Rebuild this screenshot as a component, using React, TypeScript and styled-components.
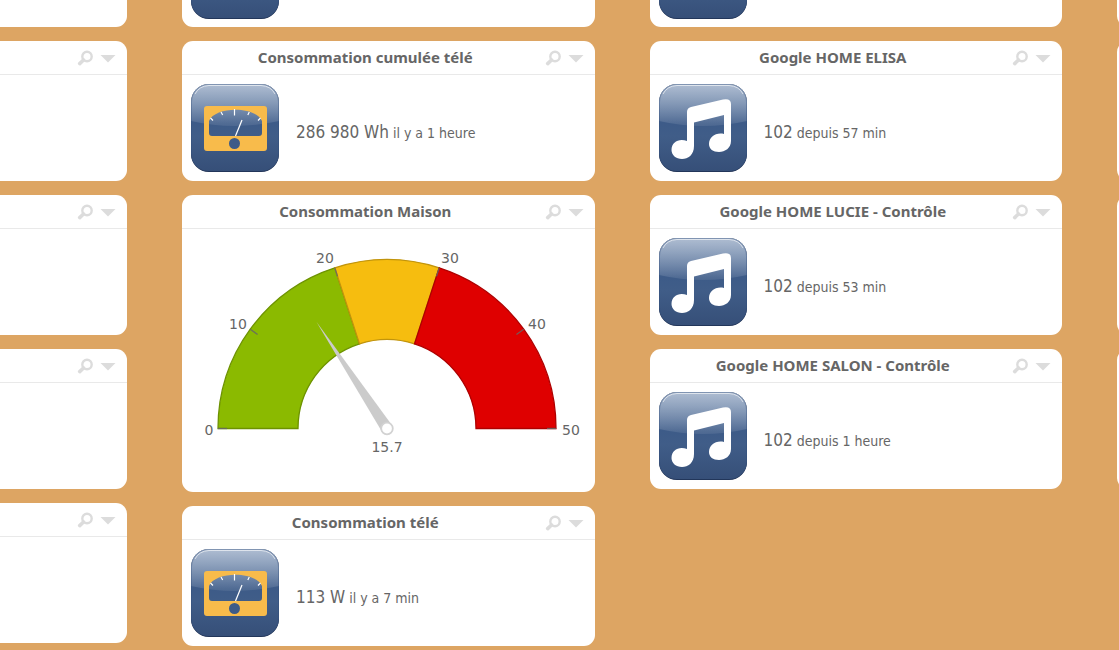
import React, { useId } from "react";
import styled, { createGlobalStyle } from "styled-components";

const GlobalStyle = createGlobalStyle`
  *, *::before, *::after { box-sizing: border-box; }
  body {
    margin: 0;
    background: #dda563;
    color: #666;
    font-family: "DejaVu Sans Condensed", "DejaVu Sans", sans-serif;
    overflow: hidden;
  }
`;

const Board = styled.main`
  display: grid;
  grid-template-columns: 127px minmax(0, 1fr) minmax(0, 1fr) 2px;
  column-gap: 55px;
  align-items: start;
`;

const Column = styled.section`
  display: flex;
  flex-direction: column;
  gap: 14px;
  min-width: 0;
`;

const EdgeColumn = styled(Column)`
  overflow: hidden;
`;

type Side = "left" | "right" | "none";

const cardRadius = { left: "0 11px 11px 0", right: "11px 0 0 11px", none: "11px" };

const Card = styled.article<{ $cut?: Side }>`
  flex: none;
  min-width: 40px;
  min-height: 140px;
  background: #fff;
  border-radius: ${({ $cut = "none" }) => cardRadius[$cut]};
`;

const PeekCard = styled.div<{ $cut?: Side }>`
  display: flex;
  align-items: flex-end;
  flex: none;
  min-width: 40px;
  height: 27px;
  padding: 0 9px 8px;
  overflow: hidden;
  background: #fff;
  border-radius: ${({ $cut = "none" }) =>
    $cut === "left" ? "0 0 11px 0" : $cut === "right" ? "0 0 0 11px" : "0 0 11px 11px"};
`;

const Header = styled.header`
  display: flex;
  align-items: center;
  height: 34px;
  padding: 0 11px 0 4px;
  border-bottom: 1px solid #e9e9e9;
`;

const Title = styled.h2`
  flex: 1;
  margin: 0;
  padding-bottom: 1px;
  font: bold 15px/20px "Noto Sans", sans-serif;
  text-align: center;
  white-space: nowrap;
`;

const Tools = styled.div`
  display: flex;
  align-items: center;
  gap: 7px;
  margin-left: auto;
`;

const ToolButton = styled.button`
  display: block;
  width: 16px;
  height: 16px;
  padding: 0;
  border: 0;
  background: none;
  color: #dcdcdc;
  cursor: pointer;

  svg { display: block; }
`;

const Body = styled.div`
  display: flex;
  align-items: center;
  gap: 17px;
  padding: 9px;
`;

const Reading = styled.p`
  margin: 0;
  padding-top: 8px;
  font-size: 14px;
  line-height: 24px;
  white-space: nowrap;
`;

const Value = styled.span`
  font-size: 17px;
`;

const Tile = styled.svg`
  display: block;
  flex: none;
  width: 88px;
  height: 88px;
`;

const GaugeArea = styled.div`
  display: flex;
  justify-content: center;
  height: 263px;

  svg { width: 412px; height: 263px; flex: none; }
  text { font: 14px "DejaVu Sans", sans-serif; fill: #666; }
`;

function IconTile({ kind }: { kind: "meter" | "music" }) {
  const id = useId();
  const base = `${id}base`;
  const gloss = `${id}gloss`;
  const clip = `${id}clip`;
  return (
    <Tile viewBox="0 0 88 88" aria-hidden="true">
      <defs>
        <linearGradient id={base} x1="0" y1="0" x2="0" y2="1">
          <stop offset="0" stopColor="#5f7ca5" />
          <stop offset="0.45" stopColor="#3d5b88" />
          <stop offset="0.6" stopColor="#405d88" />
          <stop offset="1" stopColor="#364f78" />
        </linearGradient>
        <linearGradient id={gloss} x1="0" y1="0" x2="0" y2="1">
          <stop offset="0" stopColor="#fff" stopOpacity="0.5" />
          <stop offset="1" stopColor="#fff" stopOpacity="0.08" />
        </linearGradient>
        <clipPath id={clip}>
          <rect width="88" height="88" rx="18" />
        </clipPath>
      </defs>
      <g clipPath={`url(#${clip})`}>
        <rect width="88" height="88" fill="#1d2c4b" />
        <rect width="88" height="87" rx="17" fill={`url(#${base})`} />
        <path d="M0 0H88V37Q44 47 0 37Z" fill={`url(#${gloss})`} />
        <rect x="0.5" y="0.5" width="87" height="87" rx="17.5" fill="none" stroke="#2f4b78" strokeOpacity="0.35" />
        <path d="M4 10Q8 2 18 1.500H70Q80 2 84 10" fill="none" stroke="#fff" strokeOpacity="0.6" />
      </g>
      {kind === "meter" ? (
        <>
          <path
            fillRule="evenodd"
            fill="#f8bb4b"
            d="M16 22H73Q76 22 76 25V64Q76 67 73 67H16Q13 67 13 64V25Q13 22 16 22ZM18 37V49Q18 52 21 52H68Q71 52 71 49V37C65 22 24 22 18 37Z"
          />
          <circle cx="43.500" cy="59.500" r="5.500" fill="#3d5b88" />
          <path d="M44.500 52L51 36" stroke="#fff" strokeWidth="1.200" />
          <path d="M43.500 25V31.500M30 28L31.700 31M58.300 28L56.800 31M19.500 34L22 36.500M69.500 34L67 36.500" stroke="#fff" strokeWidth="1.200" />
        </>
      ) : (
        <path
          fill="#fff"
          d="M28 28Q28 24 32 23L64 15.500Q72 14 72 20V57C72 64 66 68 60 68C54 68 50 65 50 60C50 53 57 48 65 50V31L35 38.500V62C35 71 29 75 23 75C17 75 12.500 71 12.500 66C12.500 58 20 54 28 57Z"
        />
      )}
    </Tile>
  );
}

function CardHeader({ title }: { title?: string }) {
  return (
    <Header>
      {title && <Title>{title}</Title>}
      <Tools>
        <ToolButton type="button" aria-label="Rechercher">
          <svg width="16" height="16" viewBox="0 0 16 16" fill="none" stroke="currentColor">
            <circle cx="10" cy="6.500" r="4.700" strokeWidth="2.400" />
            <path d="M6.500 10L2.700 13.600" strokeWidth="3.600" strokeLinecap="round" />
          </svg>
        </ToolButton>
        <ToolButton type="button" aria-label="Menu">
          <svg width="16" height="16" viewBox="0 0 16 16">
            <path d="M0.500 5H15.500L8 12.500Z" fill="currentColor" />
          </svg>
        </ToolButton>
      </Tools>
    </Header>
  );
}

interface SensorProps {
  title: string;
  kind: "meter" | "music";
  value: string;
  since: string;
}

function SensorCard({ title, kind, value, since }: SensorProps) {
  return (
    <Card>
      <CardHeader title={title} />
      <Body>
        <IconTile kind={kind} />
        <Reading>
          <Value>{value}</Value> {since}
        </Reading>
      </Body>
    </Card>
  );
}

const CX = 205;
const CY = 199.5;
const OUTER = 169;
const INNER = 89;
const MAX = 50;

function polar(value: number, radius: number) {
  const angle = Math.PI * (1 - value / MAX);
  return { x: CX + radius * Math.cos(angle), y: CY - radius * Math.sin(angle) };
}

function segment(from: number, to: number) {
  const a = polar(from, OUTER);
  const b = polar(to, OUTER);
  const c = polar(to, INNER);
  const d = polar(from, INNER);
  return `M${a.x} ${a.y}A${OUTER} ${OUTER} 0 0 1 ${b.x} ${b.y}L${c.x} ${c.y}A${INNER} ${INNER} 0 0 0 ${d.x} ${d.y}Z`;
}

const ranges = [
  { from: 0, to: 20, fill: "#8bba00", stroke: "#6d9200" },
  { from: 20, to: 30, fill: "#f6bd0f", stroke: "#c1940c" },
  { from: 30, to: 50, fill: "#df0000", stroke: "#ae0000" },
];

const labels = [
  { value: 0, x: 27, y: 206 },
  { value: 10, x: 56, y: 100 },
  { value: 20, x: 143, y: 34 },
  { value: 30, x: 268, y: 34 },
  { value: 40, x: 355, y: 100 },
  { value: 50, x: 389, y: 206 },
];

function Gauge({ value }: { value: number }) {
  const angle = (value / MAX) * 180;
  return (
    <GaugeArea>
      <svg viewBox="0 0 412 263" role="img" aria-label={`${value}`}>
        {ranges.map((r) => (
          <path key={r.from} d={segment(r.from, r.to)} fill={r.fill} stroke={r.stroke} strokeWidth="1.300" />
        ))}
        {labels.map(({ value: v, x, y }) => {
          const a = polar(v, OUTER);
          const b = polar(v, OUTER - 9);
          return (
            <g key={v}>
              <path d={`M${a.x} ${a.y}L${b.x} ${b.y}`} stroke="#666" strokeOpacity="0.85" strokeWidth="1.300" />
              <text x={x} y={y} textAnchor="middle">{v}</text>
            </g>
          );
        })}
        <path d={`M${CX - 128} ${CY}L${CX} ${CY - 6}V${CY + 6}Z`} fill="#cbcbcb" transform={`rotate(${angle} ${CX} ${CY})`} />
        <circle cx={CX} cy={CY} r="5.800" fill="#fff" stroke="#d2d2d2" strokeWidth="1.800" />
        <text x={CX} y={223} textAnchor="middle">{value}</text>
      </svg>
    </GaugeArea>
  );
}

export default function App() {
  return (
    <>
      <GlobalStyle />
      <Board>
        <Column>
          <PeekCard $cut="left" />
          {[1, 2, 3, 4].map((n) => (
            <Card key={n} $cut="left">
              <CardHeader />
            </Card>
          ))}
        </Column>
        <Column>
          <PeekCard>
            <IconTile kind="meter" />
          </PeekCard>
          <SensorCard title="Consommation cumulée télé" kind="meter" value="286 980 Wh" since="il y a 1 heure" />
          <Card>
            <CardHeader title="Consommation Maison" />
            <Gauge value={15.7} />
          </Card>
          <SensorCard title="Consommation télé" kind="meter" value="113 W" since="il y a 7 min" />
        </Column>
        <Column>
          <PeekCard>
            {/* Only the lower edge of this tile is in view */}
            <IconTile kind="meter" />
          </PeekCard>
          <SensorCard title="Google HOME ELISA" kind="music" value="102" since="depuis 57 min" />
          <SensorCard title="Google HOME LUCIE - Contrôle" kind="music" value="102" since="depuis 53 min" />
          <SensorCard title="Google HOME SALON - Contrôle" kind="music" value="102" since="depuis 1 heure" />
        </Column>
        <EdgeColumn>
          <PeekCard $cut="right" />
          {[1, 2, 3].map((n) => (
            <Card key={n} $cut="right" />
          ))}
        </EdgeColumn>
      </Board>
    </>
  );
}
